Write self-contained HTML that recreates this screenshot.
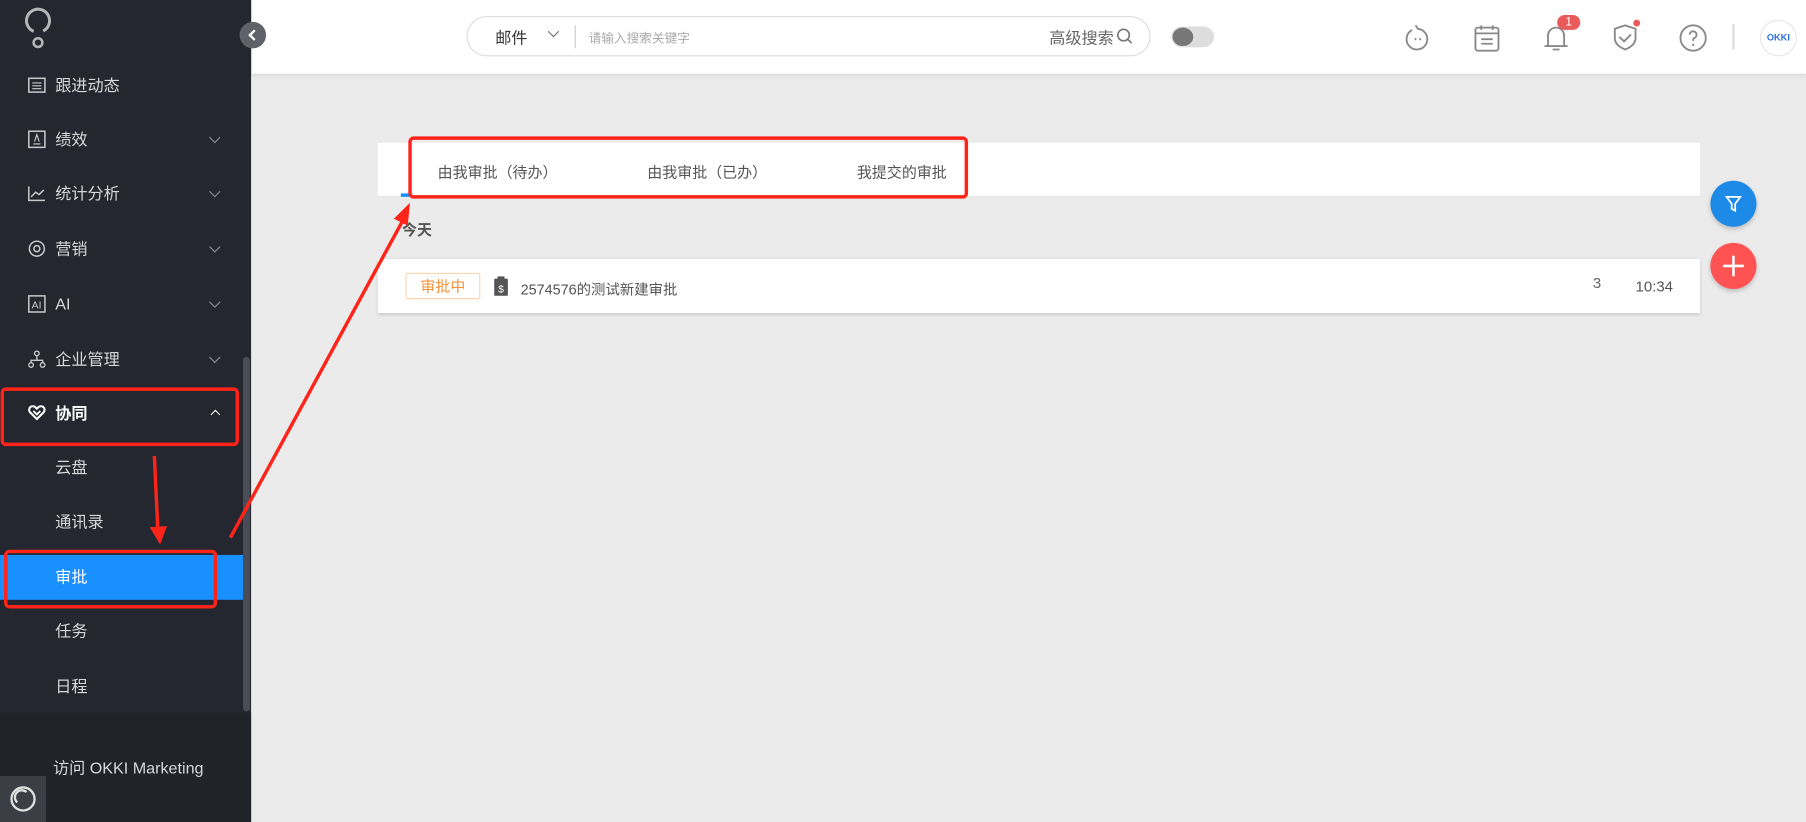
<!DOCTYPE html>
<html><head><meta charset="utf-8"><style>
*{margin:0;padding:0;box-sizing:border-box}
html,body{width:1806px;height:822px;overflow:hidden;background:#ebebeb;font-family:"Liberation Sans","Noto Sans CJK SC",sans-serif}
#w{width:1568px;height:714px;position:relative;transform:scale(1.15179,1.15126);transform-origin:0 0;background:#ebebeb}
.a{position:absolute}
#side{left:0;top:0;width:218px;height:714px;background:#24272f}
.mi{position:absolute;left:24px;color:#d6d8dc;font-size:14px;height:20px;line-height:20px;display:flex;align-items:center}
.mi svg{margin-right:8px}
.chev{position:absolute;left:183px;width:7px;height:7px;border-right:1.5px solid #8a8d93;border-bottom:1.5px solid #8a8d93;transform:rotate(45deg)}
.sub{position:absolute;left:48px;color:#d6d8dc;font-size:14px}
#hdr{left:219px;top:0;width:1349px;height:64px;background:#fff;box-shadow:0 2px 4px rgba(0,0,0,.08)}
.ic{position:absolute;top:20px}
</style></head><body><div id="w">
<div id="side" class="a">
<svg class="a" style="left:20px;top:6px" width="26" height="38" viewBox="0 0 26 38"><circle cx="13" cy="12" r="10" fill="none" stroke="#b4b6ba" stroke-width="2.6" stroke-dasharray="54 9" transform="rotate(112 13 12)"/><circle cx="13" cy="31" r="3.8" fill="none" stroke="#b4b6ba" stroke-width="2.2"/></svg>
<div class="mi" style="top:64px"><svg width="16" height="14" viewBox="0 0 16 14"><rect x="1" y="1" width="14" height="12" fill="none" stroke="#c8cace" stroke-width="1.3"/><path d="M4 5h8M4 7.5h8M4 10h8" stroke="#c8cace"/></svg>跟进动态</div>
<div class="mi" style="top:111px"><svg width="16" height="16" viewBox="0 0 16 16"><rect x="1" y="1" width="14" height="14" fill="none" stroke="#c8cace" stroke-width="1.3"/><path d="M5 12h6M6 10l2-6 2 6" fill="none" stroke="#c8cace"/></svg>绩效</div><div class="chev" style="top:116px"></div>
<div class="mi" style="top:158px"><svg width="16" height="14" viewBox="0 0 16 14"><path d="M1 1v12h14M3 10l4-4 3 2 4-4" fill="none" stroke="#c8cace" stroke-width="1.3"/></svg>统计分析</div><div class="chev" style="top:163px"></div>
<div class="mi" style="top:206px"><svg width="16" height="16" viewBox="0 0 16 16"><circle cx="8" cy="8" r="6.5" fill="none" stroke="#c8cace" stroke-width="1.3"/><circle cx="8" cy="8" r="2.6" fill="none" stroke="#c8cace" stroke-width="1.3"/></svg>营销</div><div class="chev" style="top:211px"></div>
<div class="mi" style="top:254px"><svg width="16" height="16" viewBox="0 0 16 16"><rect x="1" y="1" width="14" height="14" fill="none" stroke="#c8cace" stroke-width="1.3"/><text x="3.5" y="12" font-size="9" fill="#c8cace" font-family="Liberation Sans">AI</text></svg>AI</div><div class="chev" style="top:259px"></div>
<div class="mi" style="top:302px"><svg width="16" height="16" viewBox="0 0 16 16"><circle cx="8" cy="3" r="2" fill="none" stroke="#c8cace" stroke-width="1.2"/><circle cx="3" cy="13" r="2" fill="none" stroke="#c8cace" stroke-width="1.2"/><circle cx="13" cy="13" r="2" fill="none" stroke="#c8cace" stroke-width="1.2"/><path d="M8 5v4M3 11V9h10v2" fill="none" stroke="#c8cace" stroke-width="1.2"/></svg>企业管理</div><div class="chev" style="top:307px"></div>
<div class="mi" style="top:349px;color:#fff;font-weight:bold"><svg width="16" height="14" viewBox="0 0 16 14"><path d="M8 12L2 6a3 3 0 0 1 5-4l1 1 1-1a3 3 0 0 1 5 4z" fill="none" stroke="#fff" stroke-width="1.8"/><path d="M5 5l3 3 3-3" fill="none" stroke="#fff" stroke-width="1.6"/></svg>协同</div>
<div class="a" style="left:184px;top:357px;width:6px;height:6px;border-left:1.5px solid #fff;border-top:1.5px solid #fff;transform:rotate(45deg)"></div>
<div class="sub" style="top:396px">云盘</div>
<div class="sub" style="top:443px">通讯录</div>
<div class="a" style="left:0;top:482px;width:211px;height:39px;background:#1890ff"></div>
<div class="sub" style="top:491px;color:#fff">审批</div>
<div class="sub" style="top:538px">任务</div>
<div class="sub" style="top:586px">日程</div>
<div class="a" style="left:211px;top:310px;width:6px;height:308px;background:#4a4d55;border-radius:3px"></div>
<div class="a" style="left:0;top:619px;width:218px;height:95px;background:#202329"></div>
<div class="a" style="left:46px;top:657px;color:#d6d8dc;font-size:14px">访问 OKKI Marketing</div>
<div class="a" style="left:0;top:674px;width:40px;height:40px;background:#3b3e45"><svg width="40" height="40"><circle cx="20" cy="20" r="10" fill="none" stroke="#e0e0e0" stroke-width="2"/><path d="M15 23a6 6 0 0 1 8-9" fill="none" stroke="#e0e0e0" stroke-width="2"/></svg></div>
</div>
<div id="hdr" class="a"></div>
<div class="a" style="left:208px;top:19px;width:23px;height:23px;border-radius:50%;background:#5f6268"><div class="a" style="left:9px;top:8px;width:7px;height:7px;border-left:2px solid #fff;border-bottom:2px solid #fff;transform:rotate(45deg)"></div></div>
<div class="a" style="left:405px;top:14px;width:594px;height:35px;border:1px solid #dcdcdc;border-radius:18px;background:#fff"></div>
<div class="a" style="left:430px;top:23px;font-size:14px;color:#333">邮件</div>
<div class="a" style="left:477px;top:24px;width:7px;height:7px;border-right:1.3px solid #777;border-bottom:1.3px solid #777;transform:rotate(45deg)"></div>
<div class="a" style="left:499px;top:22px;width:1px;height:20px;background:#ccc"></div>
<div class="a" style="left:511px;top:25px;font-size:11px;color:#aaa">请输入搜索关键字</div>
<div class="a" style="left:911px;top:23px;font-size:14px;color:#666">高级搜索</div>
<svg class="a" style="left:969px;top:24px" width="15" height="15"><circle cx="6.5" cy="6.5" r="5" fill="none" stroke="#777" stroke-width="1.4"/><path d="M10 10l3.5 3.5" stroke="#777" stroke-width="1.4"/></svg>
<div class="a" style="left:1017px;top:23px;width:37px;height:18px;border-radius:9px;background:#ddd"></div>
<div class="a" style="left:1018px;top:24px;width:18px;height:16px;border-radius:50%;background:#777"></div>
<svg class="ic" style="left:1218px" width="26" height="26" viewBox="0 0 26 26"><path d="M8 6a9 9 0 1 0 5-1l-2-3" fill="none" stroke="#888" stroke-width="1.6"/><path d="M11 13v2M15 13v2" stroke="#888" stroke-width="1.4"/></svg>
<svg class="ic" style="left:1279px" width="24" height="26" viewBox="0 0 24 26"><rect x="2" y="4" width="20" height="20" rx="2" fill="none" stroke="#888" stroke-width="1.6"/><path d="M7 2v4M17 2v4M2 9h20M7 14h10M7 18h10" stroke="#888" stroke-width="1.6"/></svg>
<svg class="ic" style="left:1339px" width="24" height="26" viewBox="0 0 24 26"><path d="M5 20V11a7 7 0 0 1 14 0v9M2 20h20M9 23h6" fill="none" stroke="#888" stroke-width="1.6"/></svg>
<div class="a" style="left:1352px;top:13px;width:20px;height:13px;border-radius:7px;background:#e95b5b;color:#fff;font-size:10px;text-align:center;line-height:13px">1</div>
<svg class="ic" style="left:1399px" width="24" height="26" viewBox="0 0 24 26"><path d="M12 2l9 3v8c0 5-4 8-9 10-5-2-9-5-9-10V5z" fill="none" stroke="#888" stroke-width="1.6"/><path d="M7 12l4 4 6-6" fill="none" stroke="#888" stroke-width="1.6"/></svg>
<div class="a" style="left:1418px;top:17px;width:6px;height:6px;border-radius:50%;background:#e95b5b"></div>
<svg class="ic" style="left:1457px" width="26" height="26" viewBox="0 0 26 26"><circle cx="13" cy="13" r="11" fill="none" stroke="#888" stroke-width="1.6"/><path d="M10 10a3 3 0 1 1 4 3c-1 .5-1 1-1 2.5" fill="none" stroke="#888" stroke-width="1.6"/><circle cx="13" cy="19" r="1" fill="#888"/></svg>
<div class="a" style="left:1504px;top:21px;width:2px;height:22px;background:#ddd"></div>
<div class="a" style="left:1528px;top:17px;width:32px;height:32px;border-radius:50%;border:1px solid #e6e6e6;background:#fff;color:#2b6de3;font-size:8px;font-weight:bold;text-align:center;line-height:30px">OKKI</div>
<div class="a" style="left:328px;top:124px;width:1148px;height:46px;background:#fff"></div>
<div class="a" style="left:348px;top:168px;width:8px;height:3px;background:#1890ff"></div>
<div class="a" style="left:380px;top:139px;font-size:13px;color:#555">由我审批（待办）</div>
<div class="a" style="left:562px;top:139px;font-size:13px;color:#555">由我审批（已办）</div>
<div class="a" style="left:744px;top:139px;font-size:13px;color:#555">我提交的审批</div>
<div class="a" style="left:349px;top:189px;font-size:13px;color:#555;font-weight:bold">今天</div>
<div class="a" style="left:328px;top:225px;width:1148px;height:47px;background:#fff;box-shadow:0 1px 3px rgba(0,0,0,.18)"></div>
<div class="a" style="left:352px;top:237px;width:65px;height:23px;border:1px solid #fbd5ad;border-radius:2px;color:#f5933a;font-size:13px;text-align:center;line-height:21px">审批中</div>
<svg class="a" style="left:429px;top:240px" width="12" height="17"><rect x="0" y="2" width="12" height="15" rx="1" fill="#555"/><rect x="3" y="0" width="6" height="3" fill="#555"/><text x="3.5" y="14" font-size="9" fill="#fff" font-family="Liberation Sans">$</text></svg>
<div class="a" style="left:452px;top:241px;font-size:12.5px;color:#555">2574576的测试新建审批</div>
<div class="a" style="left:1383px;top:238px;font-size:13px;color:#666">3</div>
<div class="a" style="left:1420px;top:241px;font-size:13px;color:#555">10:34</div>
<div class="a" style="left:1485px;top:157px;width:40px;height:40px;border-radius:50%;background:#1e8ae8;box-shadow:0 2px 4px rgba(0,0,0,.2)"><svg width="40" height="40"><path d="M14 14h12l-4.5 6v6l-3-1.5V20z" fill="none" stroke="#fff" stroke-width="1.5"/></svg></div>
<div class="a" style="left:1485px;top:211px;width:40px;height:40px;border-radius:50%;background:#ff5353;box-shadow:0 2px 4px rgba(0,0,0,.2)"><svg width="40" height="40"><path d="M20 11v18M11 20h18" stroke="#fff" stroke-width="2.2"/></svg></div>
<svg class="a" style="left:0;top:0" width="1568" height="714">
<g fill="none" stroke="#ff2419" stroke-width="3"><rect x="356" y="120" width="483" height="51" rx="3"/><rect x="2" y="338" width="204" height="48" rx="3"/><rect x="5" y="479" width="182" height="48" rx="3"/></g>
<path d="M134 396l3 64" stroke="#ff2419" stroke-width="3"/><path d="M130 458l9 15 6-16z" fill="#ff2419"/>
<path d="M200 467l150-276" stroke="#ff2419" stroke-width="3"/><path d="M342 190l14-14 -2 20z" fill="#ff2419"/>
</svg>
</div></body></html>
